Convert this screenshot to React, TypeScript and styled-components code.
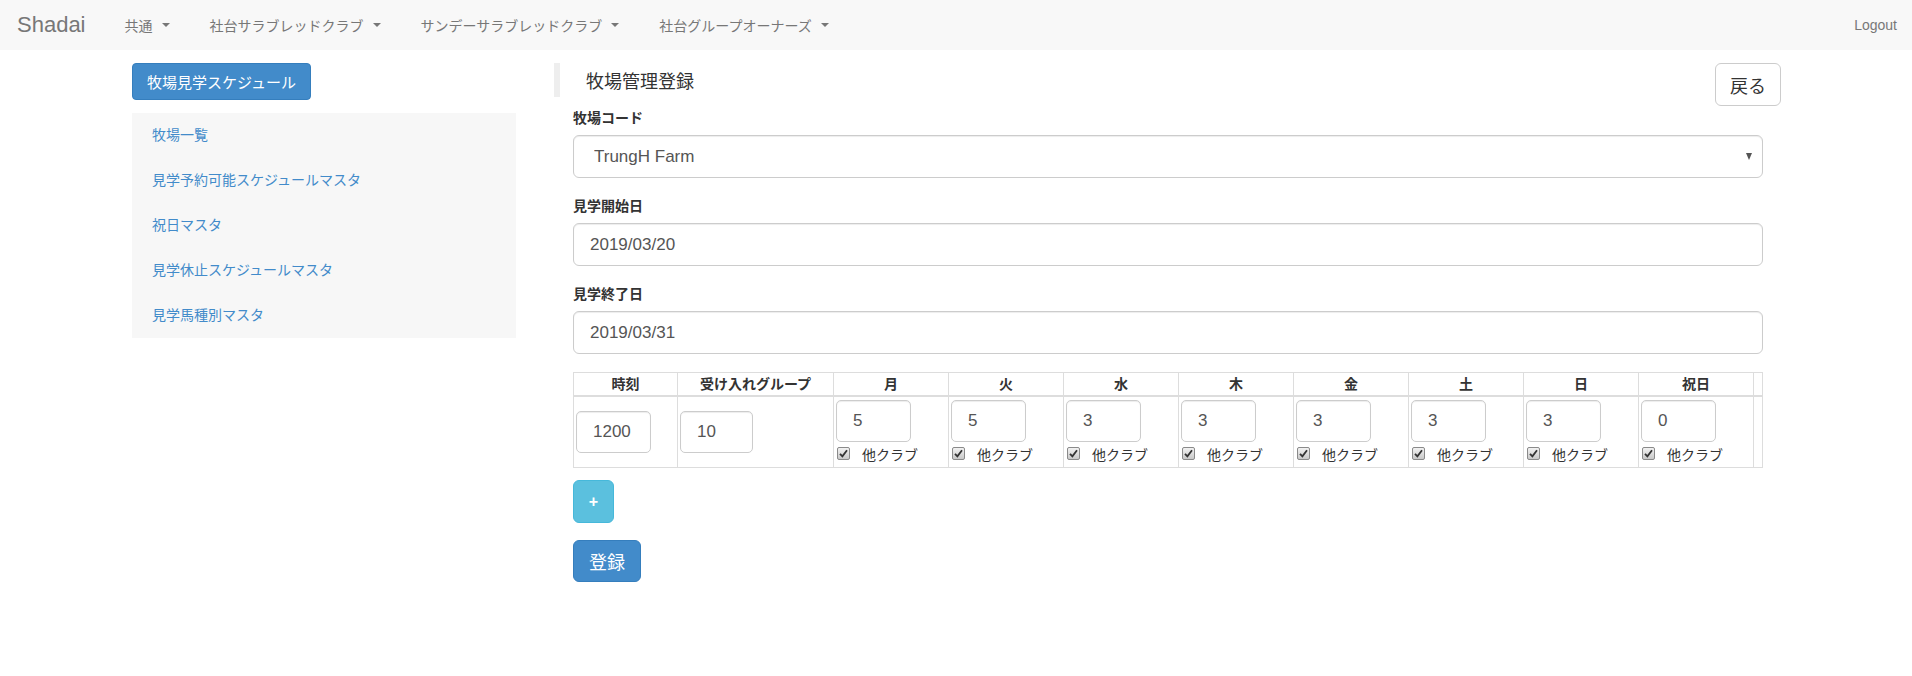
import React from "react";
import styled, { createGlobalStyle } from "styled-components";

const GlobalStyle = createGlobalStyle`
  html, body { margin: 0; padding: 0; background: #fff; }
  body {
    font-family: "Liberation Sans", "Noto Sans CJK JP", sans-serif;
    font-size: 14px;
    color: #333;
  }
  * { box-sizing: border-box; }
`;

const Navbar = styled.nav`
  height: 50px;
  background: #f8f8f8;
  display: flex;
  align-items: center;
  padding: 0 15px 0 17px;
`;

const Brand = styled.span`
  font-size: 22px;
  color: #777;
  padding-right: 19px;
`;

const NavItem = styled.span`
  display: flex;
  align-items: center;
  padding: 0 20px;
  font-size: 14px;
  color: #777;
`;

const Caret = styled.span`
  display: inline-block;
  width: 0;
  height: 0;
  margin-left: 9px;
  border-top: 4px solid #777;
  border-left: 4px solid transparent;
  border-right: 4px solid transparent;
`;

const Spacer = styled.div`
  flex: 1;
`;

const Logout = styled.span`
  font-size: 14px;
  color: #777;
`;

const Main = styled.div`
  display: flex;
  align-items: flex-start;
  gap: 38px;
  padding: 13px 131px 40px 132px;
`;

const Sidebar = styled.aside`
  width: 384px;
  display: flex;
  flex-direction: column;
  align-items: flex-start;
`;

const PrimaryButton = styled.button<{ $size?: "md" | "lg" }>`
  background: #428bca;
  border: 1px solid #357ebd;
  color: #fff;
  font-family: inherit;
  font-size: ${(p) => (p.$size === "lg" ? "18px" : "15px")};
  height: ${(p) => (p.$size === "lg" ? "42px" : "37px")};
  padding: ${(p) => (p.$size === "lg" ? "0 15px" : "0 14px")};
  border-radius: ${(p) => (p.$size === "lg" ? "6px" : "4px")};
`;

const SideList = styled.ul`
  list-style: none;
  margin: 13px 0 0;
  padding: 0;
  width: 100%;
  background: #f7f7f7;
`;

const SideItem = styled.li`
  padding: 12px 20px;
  line-height: 21px;
  font-size: 14px;
  color: #428bca;
`;

const Content = styled.section`
  flex: 1;
  min-width: 0;
`;

const HeaderRow = styled.div`
  display: flex;
  justify-content: space-between;
  align-items: flex-start;
`;

const Callout = styled.h4`
  margin: 0;
  height: 34px;
  display: flex;
  align-items: center;
  border-left: 6px solid #eee;
  padding-left: 26px;
  font-size: 18px;
  font-weight: normal;
  color: #333;
`;

const DefaultButton = styled.button`
  height: 43px;
  padding: 0 14px;
  background: #fff;
  border: 1px solid #ccc;
  border-radius: 6px;
  color: #333;
  font-family: inherit;
  font-size: 18px;
`;

const Form = styled.div`
  padding: 2px 18px 0 19px;
`;

const FormGroup = styled.div`
  margin-bottom: 18px;
`;

const Label = styled.label`
  display: block;
  font-size: 14px;
  font-weight: bold;
  line-height: 20px;
  margin-bottom: 7px;
  color: #333;
`;

const TextInput = styled.input<{ $w?: number }>`
  display: block;
  width: ${(p) => (p.$w ? `${p.$w}px` : "100%")};
  height: ${(p) => (p.$w ? "42px" : "43px")};
  padding: 0 16px;
  font-family: "Liberation Sans", sans-serif;
  font-size: 17px;
  color: #555;
  background: #fff;
  border: 1px solid #ccc;
  border-radius: ${(p) => (p.$w ? "5px" : "6px")};
  box-shadow: inset 0 1px 1px rgba(0, 0, 0, 0.075);
  outline: none;
`;

const SelectWrap = styled.div`
  position: relative;
  &::after {
    content: "";
    position: absolute;
    right: 11px;
    top: 18px;
    border-top: 7px solid #555;
    border-left: 3px solid transparent;
    border-right: 3px solid transparent;
  }
`;

const Select = styled.select`
  display: block;
  width: 100%;
  height: 43px;
  padding: 0 20px;
  appearance: none;
  -webkit-appearance: none;
  font-family: "Liberation Sans", sans-serif;
  font-size: 17px;
  color: #555;
  background: #fff;
  border: 1px solid #ccc;
  border-radius: 6px;
  box-shadow: inset 0 1px 1px rgba(0, 0, 0, 0.075);
  outline: none;
`;

const Table = styled.table`
  width: 100%;
  border-collapse: collapse;
  table-layout: fixed;
`;

const Th = styled.th`
  border: 1px solid #ddd;
  border-bottom: 2px solid #ddd;
  padding: 1px 4px;
  line-height: 20px;
  font-size: 14px;
  font-weight: bold;
  text-align: center;
  color: #333;
`;

const Td = styled.td<{ $middle?: boolean }>`
  border: 1px solid #ddd;
  padding: 3px 2px 3px 2px;
  vertical-align: ${(p) => (p.$middle ? "middle" : "top")};
`;

const CheckRow = styled.div`
  display: flex;
  align-items: center;
  gap: 12px;
  height: 21px;
  margin-top: 1px;
  padding-left: 1px;
  font-size: 14px;
  color: #333;
`;

const CheckBox = styled.span`
  width: 13px;
  height: 13px;
  border: 1px solid #8a8a8a;
  border-radius: 2px;
  background: linear-gradient(#f2f2f2, #c8c8c8);
  display: flex;
  align-items: center;
  justify-content: center;
`;

const InfoButton = styled.button`
  display: block;
  margin-top: 12px;
  width: 41px;
  height: 43px;
  background: #5bc0de;
  border: 1px solid #46b8da;
  border-radius: 6px;
  color: #fff;
  font-family: inherit;
  font-size: 16px;
  font-weight: bold;
`;

const SubmitWrap = styled.div`
  margin-top: 17px;
`;

const days = [
  { d: "月", v: "5" },
  { d: "火", v: "5" },
  { d: "水", v: "3" },
  { d: "木", v: "3" },
  { d: "金", v: "3" },
  { d: "土", v: "3" },
  { d: "日", v: "3" },
  { d: "祝日", v: "0" },
];

const Check = () => (
  <CheckBox>
    <svg width="9" height="9" viewBox="0 0 9 9">
      <path d="M1 4.8 L3.4 7.4 L8 1.2" fill="none" stroke="#333" strokeWidth="1.8" />
    </svg>
  </CheckBox>
);

export default function App() {
  return (
    <>
      <GlobalStyle />
      <Navbar>
        <Brand>Shadai</Brand>
        <NavItem>
          共通<Caret />
        </NavItem>
        <NavItem>
          社台サラブレッドクラブ<Caret />
        </NavItem>
        <NavItem>
          サンデーサラブレッドクラブ<Caret />
        </NavItem>
        <NavItem>
          社台グループオーナーズ<Caret />
        </NavItem>
        <Spacer />
        <Logout>Logout</Logout>
      </Navbar>
      <Main>
        <Sidebar>
          <PrimaryButton>牧場見学スケジュール</PrimaryButton>
          <SideList>
            <SideItem>牧場一覧</SideItem>
            <SideItem>見学予約可能スケジュールマスタ</SideItem>
            <SideItem>祝日マスタ</SideItem>
            <SideItem>見学休止スケジュールマスタ</SideItem>
            <SideItem>見学馬種別マスタ</SideItem>
          </SideList>
        </Sidebar>
        <Content>
          <HeaderRow>
            <Callout>牧場管理登録</Callout>
            <DefaultButton>戻る</DefaultButton>
          </HeaderRow>
          <Form>
            <FormGroup>
              <Label>牧場コード</Label>
              <SelectWrap>
                <Select defaultValue="t">
                  <option value="t">TrungH Farm</option>
                </Select>
              </SelectWrap>
            </FormGroup>
            <FormGroup>
              <Label>見学開始日</Label>
              <TextInput defaultValue="2019/03/20" />
            </FormGroup>
            <FormGroup>
              <Label>見学終了日</Label>
              <TextInput defaultValue="2019/03/31" />
            </FormGroup>
            <Table>
              <colgroup>
                <col style={{ width: 104 }} />
                <col style={{ width: 156 }} />
                {days.map((d) => (
                  <col key={d.d} style={{ width: 115 }} />
                ))}
                <col />
              </colgroup>
              <thead>
                <tr>
                  <Th>時刻</Th>
                  <Th>受け入れグループ</Th>
                  {days.map((d) => (
                    <Th key={d.d}>{d.d}</Th>
                  ))}
                  <Th />
                </tr>
              </thead>
              <tbody>
                <tr>
                  <Td $middle>
                    <TextInput $w={75} defaultValue="1200" />
                  </Td>
                  <Td $middle>
                    <TextInput $w={73} defaultValue="10" />
                  </Td>
                  {days.map((d) => (
                    <Td key={d.d}>
                      <TextInput $w={75} defaultValue={d.v} />
                      <CheckRow>
                        <Check />
                        他クラブ
                      </CheckRow>
                    </Td>
                  ))}
                  <Td />
                </tr>
              </tbody>
            </Table>
            <InfoButton>+</InfoButton>
            <SubmitWrap>
              <PrimaryButton $size="lg">登録</PrimaryButton>
            </SubmitWrap>
          </Form>
        </Content>
      </Main>
    </>
  );
}
